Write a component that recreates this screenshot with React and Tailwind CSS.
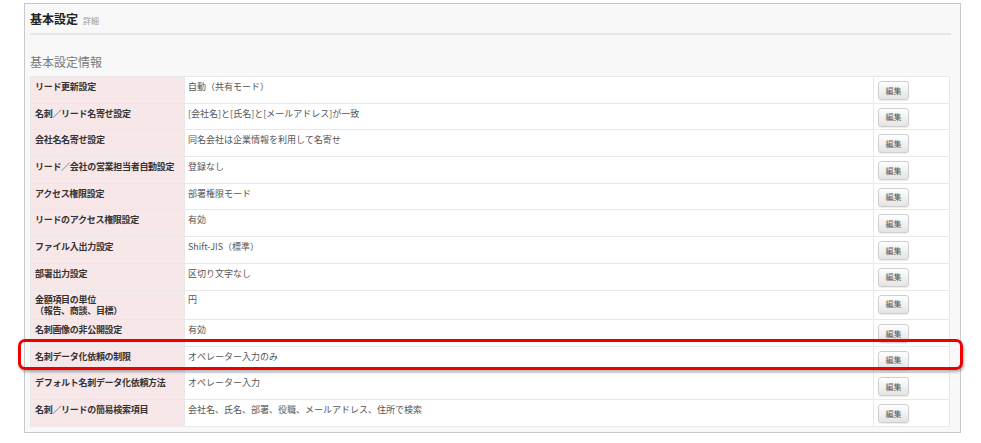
import React from 'react';

const rows = [
  { label: 'リード更新設定', value: '自動（共有モード）' },
  { label: '名刺／リード名寄せ設定', value: '[会社名]と[氏名]と[メールアドレス]が一致' },
  { label: '会社名名寄せ設定', value: '同名会社は企業情報を利用して名寄せ' },
  { label: 'リード／会社の営業担当者自動設定', value: '登録なし' },
  { label: 'アクセス権限設定', value: '部署権限モード' },
  { label: 'リードのアクセス権限設定', value: '有効' },
  { label: 'ファイル入出力設定', value: 'Shift-JIS（標準）' },
  { label: '部署出力設定', value: '区切り文字なし' },
  { label: '金額項目の単位', sub: '（報告、商談、目標）', value: '円', tall: true },
  { label: '名刺画像の非公開設定', value: '有効' },
  { label: '名刺データ化依頼の制限', value: 'オペレーター入力のみ' },
  { label: 'デフォルト名刺データ化依頼方法', value: 'オペレーター入力' },
  { label: '名刺／リードの簡易検索項目', value: '会社名、氏名、部署、役職、メールアドレス、住所で検索' },
];

const EditButton = () => (
  <button className="flex h-[19px] w-[31px] items-center justify-center rounded-[3px] border border-[#cfcfcf] bg-gradient-to-b from-white to-[#e4e4e4] text-[8px] leading-none text-[#555] shadow-[0_1px_1px_rgba(0,0,0,0.08)]">
    編集
  </button>
);

const App = () => {
  return (
    <div
      className="relative h-[443px] w-[981px] overflow-hidden bg-white pl-[24px] pt-[3px]"
      style={{ fontFamily: '"Noto Sans CJK JP", "Liberation Sans", sans-serif' }}
    >
      <div className="h-[430px] w-[937px] border border-[#c9c9c9] bg-[#f8f8f8] pl-[5px] pr-[9px]">
        {/* header */}
        <div className="mb-[2px] flex h-[27px] items-baseline gap-[5px] pt-[7px]">
          <span className="text-[12px] font-bold leading-[16px] text-[#222]">基本設定</span>
          <span className="text-[8px] text-[#999]">詳細</span>
        </div>
        <div className="h-[2px] bg-[#e6e6e6]" />

        <div className="mb-[6px] mt-[19px] text-[12px] leading-[16px] text-[#7a7a7a]">基本設定情報</div>

        <table className="w-[920px] border-collapse bg-white text-[9px]">
          <tbody>
            {rows.map((row, i) => (
              <tr key={i} className={row.tall ? 'h-[29.6px]' : 'h-[26.7px]'}>
                <td className="w-[154px] border border-[#e8e8e8] bg-[#f7e7e9] px-[4px] align-top">
                  <div
                    className={`font-bold tracking-[-0.3px] text-[#333] ${
                      row.tall ? 'pt-[3px] leading-[11.5px]' : 'pt-[4px] leading-[12px]'
                    }`}
                  >
                    {row.label}
                    {row.sub && <div>{row.sub}</div>}
                  </div>
                </td>
                <td className="border border-[#e8e8e8] px-[3px] align-top">
                  <div
                    className={`text-[#555] ${
                      row.tall ? 'pt-[3px] leading-[11.5px]' : 'pt-[4px] leading-[12px]'
                    }`}
                  >
                    {row.value}
                  </div>
                </td>
                <td className="w-[76px] border border-[#e8e8e8] pl-[4px] pt-[4px] align-top">
                  <EditButton />
                </td>
              </tr>
            ))}
          </tbody>
        </table>
      </div>

      {/* highlight annotation */}
      <div className="absolute left-[18px] top-[339px] h-[31px] w-[945px] rounded-[7px] border-[3px] border-[#ee0000] shadow-[1px_2px_3px_rgba(0,0,0,0.3)]" />
    </div>
  );
};

export default App;
